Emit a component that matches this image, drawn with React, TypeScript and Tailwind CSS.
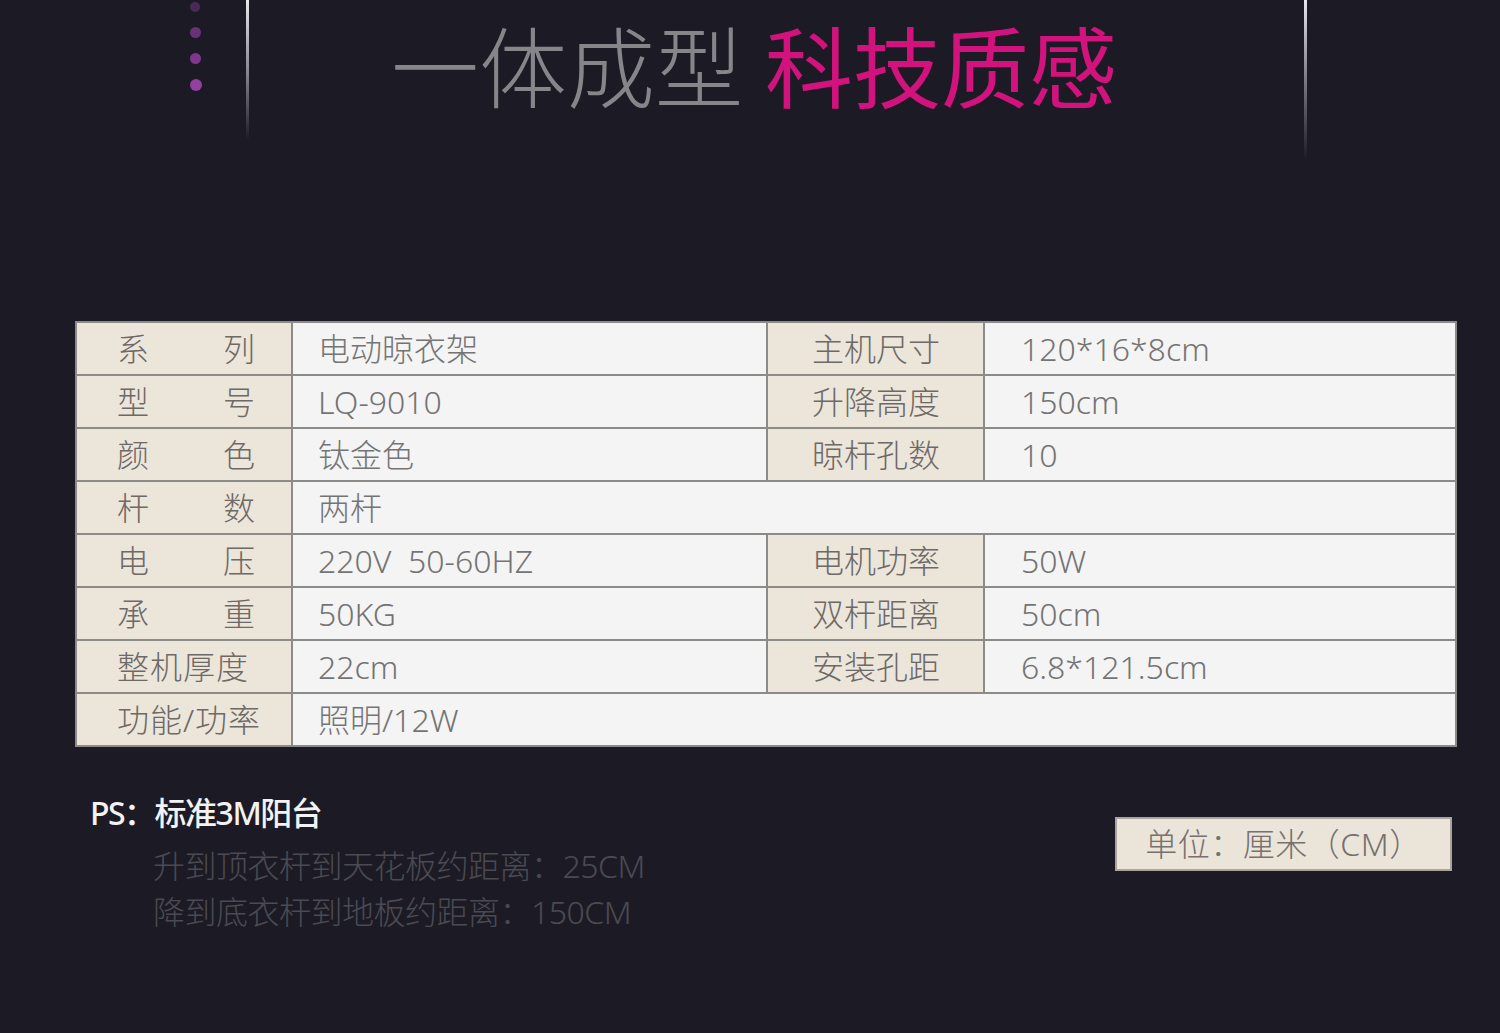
import React from 'react';

type Row = {
  label: string[];
  value: string;
  label2?: string;
  value2?: string;
};

const rows: Row[] = [
  { label: ['系', '列'], value: '电动晾衣架', label2: '主机尺寸', value2: '120*16*8cm' },
  { label: ['型', '号'], value: 'LQ-9010', label2: '升降高度', value2: '150cm' },
  { label: ['颜', '色'], value: '钛金色', label2: '晾杆孔数', value2: '10' },
  { label: ['杆', '数'], value: '两杆' },
  { label: ['电', '压'], value: '220V  50-60HZ', label2: '电机功率', value2: '50W' },
  { label: ['承', '重'], value: '50KG', label2: '双杆距离', value2: '50cm' },
  { label: ['整机厚度'], value: '22cm', label2: '安装孔距', value2: '6.8*121.5cm' },
  { label: ['功能/功率'], value: '照明/12W' },
];

const font = "font-['Noto_Sans','Noto_Sans_CJK_SC',sans-serif]";

export default function App() {
  return (
    <div className={`min-h-[1033px] w-[1500px] bg-[#1c1b25] ${font}`}>
      {/* header */}
      <div className="relative h-[321px]">
        <div className="absolute left-[190px] top-0 flex flex-col gap-[15px] pt-[2px]">
          <span className="h-[10px] w-[10px] rounded-full bg-[#4a2a55]" />
          <span className="h-[11px] w-[11px] rounded-full bg-[#6a3078]" />
          <span className="h-[11px] w-[11px] rounded-full bg-[#7f378e]" />
          <span className="h-[12px] w-[12px] rounded-full bg-[#9340a0]" />
        </div>
        <div className="absolute left-[246px] top-0 h-[140px] w-[3px] bg-gradient-to-b from-[#e8e8ee] via-[#8a8a96] to-transparent" />
        <div className="absolute left-[1304px] top-0 h-[160px] w-[3px] bg-gradient-to-b from-[#e8e8ee] via-[#7a7a86] to-transparent" />
        <div className="flex justify-center gap-[22px] pt-[12px] pl-[8px] text-[88px] leading-[110px]">
          <span className="font-light text-[#86868a]">一体成型</span>
          <span className="font-normal text-[#d2137e]">科技质感</span>
        </div>
      </div>

      {/* spec table */}
      <div className="ml-[75px] grid w-[1382px] grid-cols-[214px_473px_215px_1fr] gap-[2px] border-2 border-[#8d8b88] bg-[#8d8b88]">
        {rows.map((r, i) => (
          <React.Fragment key={i}>
            <div
              className={`flex h-[51px] items-center whitespace-nowrap bg-[#ece5da] pl-[40px] pr-[36px] text-[32px] font-light text-[#6c6966] ${
                r.label.length > 1 ? 'justify-between' : 'tracking-[1px]'
              }`}
            >
              {r.label.map((c) => (
                <span key={c}>{c}</span>
              ))}
            </div>
            <div
              className={`flex h-[51px] items-center whitespace-pre bg-[#f4f4f4] pl-[25px] text-[32px] font-light text-[#747474] ${
                r.label2 ? '' : 'col-span-3'
              }`}
            >
              {r.value}
            </div>
            {r.label2 && (
              <>
                <div className="flex h-[51px] items-center whitespace-nowrap bg-[#ece5da] pl-[44px] text-[32px] font-light text-[#6c6966]">
                  {r.label2}
                </div>
                <div className="flex h-[51px] items-center bg-[#f4f4f4] pl-[36px] text-[32px] font-light text-[#747474]">
                  {r.value2}
                </div>
              </>
            )}
          </React.Fragment>
        ))}
      </div>

      {/* notes */}
      <div className="ml-[75px] flex w-[1377px] items-start justify-between pt-[46px]">
        <div className="pl-[15px]">
          <div className="text-[32px] font-medium leading-[40px] tracking-[-1.5px] text-[#f2f2f4]">PS：标准3M阳台</div>
          <div className="mt-[10px] pl-[63px] text-[32px] font-light leading-[46px] tracking-[-0.5px] text-[#4b4a52]">
            <div>升到顶衣杆到天花板约距离：25CM</div>
            <div>降到底衣杆到地板约距离：150CM</div>
          </div>
        </div>
        <div className="mt-[24px] flex h-[54px] w-[337px] items-center justify-center border-2 border-[#a9a49c] bg-[#ebe4d9] text-[32px] font-light tracking-[0.5px] text-[#747170]">
          单位：厘米（CM）
        </div>
      </div>
    </div>
  );
}
